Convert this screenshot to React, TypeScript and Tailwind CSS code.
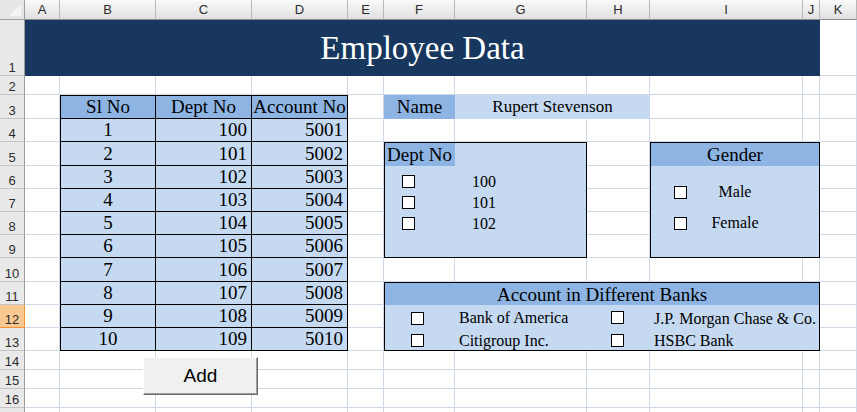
const cols = ["A", "B", "C", "D", "E", "F", "G", "H", "I", "J", "K"];
const rows = Array.from({ length: 17 }, (_, i) => i + 1);

const serif = "font-['Liberation_Serif','Times_New_Roman',serif] text-black";

const tableRows = [
  ["1", "100", "5001"],
  ["2", "101", "5002"],
  ["3", "102", "5003"],
  ["4", "103", "5004"],
  ["5", "104", "5005"],
  ["6", "105", "5006"],
  ["7", "106", "5007"],
  ["8", "107", "5008"],
  ["9", "108", "5009"],
  ["10", "109", "5010"],
];

function Box() {
  return <span className="block h-[13px] w-[13px] shrink-0 border border-black bg-white" />;
}

export default function App() {
  return (
    <div className="h-[412px] w-[857px] overflow-hidden bg-white">
      <div className="grid grid-cols-[25px_35px_96px_96px_96px_36px_71px_132px_63px_153px_17px_37px] grid-rows-[20px_56px_19px_24px_23px_24px_23px_23px_23px_23px_24px_23px_23px_23px_19px_19px_19px_19px]">
        {/* corner */}
        <div className="relative col-start-1 row-start-1 border-r border-b border-[#9c9c9c] bg-[#e6e6e6]">
          <svg className="absolute right-[3px] bottom-[3px]" width="12" height="12" viewBox="0 0 12 12">
            <polygon points="12,0 12,12 0,12" fill="#f4f4f4" />
          </svg>
        </div>

        {/* column headers */}
        {cols.map((c, i) => (
          <div
            key={c}
            style={{ gridColumn: i + 2, gridRow: 1 }}
            className="flex items-center justify-center border-r border-b border-r-[#b8b8b8] border-b-[#8e8e8e] bg-linear-to-b from-[#fafafa] to-[#e0e0e0] font-['Liberation_Sans',Arial,sans-serif] text-[13px] text-[#2b2b2b]"
          >
            {c}
          </div>
        ))}

        {/* row headers */}
        {rows.map((r) => (
          <div
            key={r}
            style={{ gridColumn: 1, gridRow: r + 1 }}
            className={
              r === 12
                ? "flex items-end justify-center border-r border-b border-[#f29436] bg-[#f9c890] pb-[1px] font-['Liberation_Sans',Arial,sans-serif] text-[13px] leading-none text-[#2b2b2b]"
                : "flex items-end justify-center border-r border-b border-r-[#9c9c9c] border-b-[#c4c4c4] bg-[#e9e9e9] pb-[1px] font-['Liberation_Sans',Arial,sans-serif] text-[13px] leading-none text-[#2b2b2b]"
            }
          >
            {r < 17 ? r : null}
          </div>
        ))}

        {/* sheet gridlines */}
        {rows.map((r) =>
          cols.map((c, i) => (
            <div
              key={c + r}
              style={{ gridColumn: i + 2, gridRow: r + 1 }}
              className="border-r border-b border-[#d0d7e5]"
            />
          ))
        )}

        {/* title A1:J1 */}
        <div className="col-start-2 col-span-10 row-start-2 flex items-center justify-center bg-[#17375e] pt-[2px] font-['Liberation_Serif','Times_New_Roman',serif] text-[33px] text-white">
          Employee Data
        </div>

        {/* name */}
        <div className={`col-start-7 row-start-4 flex items-center justify-center bg-[#8db4e2] text-[19px] ${serif}`}>Name</div>
        <div className={`col-start-8 col-span-2 row-start-4 flex items-center justify-center bg-[#c5d9f1] text-[17px] ${serif}`}>
          Rupert Stevenson
        </div>

        {/* data table B3:D13 */}
        <div className={`col-start-3 col-span-3 row-start-4 row-span-11 grid grid-cols-subgrid grid-rows-subgrid text-[19px] ${serif}`}>
          {["Sl No", "Dept No", "Account No"].map((h, i) => (
            <div
              key={h}
              className={
                i === 0
                  ? "flex items-center justify-center border-t border-r border-b border-l border-black bg-[#8db4e2] whitespace-nowrap"
                  : "flex items-center justify-center border-t border-r border-b border-black bg-[#8db4e2] whitespace-nowrap"
              }
            >
              {h}
            </div>
          ))}
          {tableRows.map((row) =>
            row.map((v, i) => (
              <div
                key={row[0] + "-" + i}
                className={
                  i === 0
                    ? "flex items-center justify-center border-r border-b border-l border-black bg-[#c5d9f1] pt-[1px]"
                    : "flex items-center justify-end border-r border-b border-black bg-[#c5d9f1] pt-[1px] pr-[4px]"
                }
              >
                {v}
              </div>
            ))
          )}
        </div>

        {/* Dept No group F5:G9 */}
        <div className={`col-start-7 col-span-2 row-start-6 row-span-5 flex flex-col border border-black bg-[#c5d9f1] ${serif}`}>
          <div className="h-[23px] w-[70px] bg-[#8db4e2] pl-[2px] text-[19px] leading-[24px]">Dept No</div>
          <div className="mt-[9px] flex flex-col gap-[8px] pl-[17px] text-[16px]">
            {["100", "101", "102"].map((d) => (
              <div key={d} className="flex h-[13px] items-center">
                <Box />
                <span className="ml-[57px] leading-none">{d}</span>
              </div>
            ))}
          </div>
        </div>

        {/* Gender group I5:J9 */}
        <div className={`col-start-10 col-span-2 row-start-6 row-span-5 flex flex-col border border-black bg-[#c5d9f1] ${serif}`}>
          <div className="h-[23px] bg-[#8db4e2] text-center text-[19px] leading-[24px]">Gender</div>
          <div className="mt-[20px] flex flex-col gap-[18px] pl-[23px] text-[16px]">
            {["Male", "Female"].map((g) => (
              <div key={g} className="flex h-[13px] items-center">
                <Box />
                <span className="-mt-[2px] w-[96px] text-center leading-none">{g}</span>
              </div>
            ))}
          </div>
        </div>

        {/* Banks F11:J13 */}
        <div className={`col-start-7 col-span-5 row-start-12 row-span-3 flex flex-col border border-black bg-[#c5d9f1] ${serif}`}>
          <div className="h-[22px] bg-[#8db4e2] text-center text-[19px] leading-[23px]">Account in Different Banks</div>
          <div className="mt-[7px] grid grid-cols-[74px_152px_43px_1fr] grid-rows-[13px_13px] items-center gap-y-[9px] text-[16px] leading-none whitespace-nowrap">
            <div className="pl-[26px]">
              <Box />
            </div>
            <span className="-mt-[2px]">Bank of America</span>
            <div className="-mt-[2px]">
              <Box />
            </div>
            <span>J.P. Morgan Chase &amp; Co.</span>
            <div className="pl-[26px]">
              <Box />
            </div>
            <span>Citigroup Inc.</span>
            <div>
              <Box />
            </div>
            <span>HSBC Bank</span>
          </div>
        </div>

        {/* Add button */}
        <div className="col-start-3 col-span-2 row-start-15 row-span-3 pt-[6px] pl-[83px]">
          <button className="flex h-[38px] w-[115px] items-center justify-center border border-t-white border-l-white border-r-[#696969] border-b-[#696969] bg-[#f0f0f0] font-['Liberation_Sans',Arial,sans-serif] text-[19px] text-black shadow-[inset_-1px_-1px_0_#a0a0a0]">
            Add
          </button>
        </div>
      </div>
    </div>
  );
}
